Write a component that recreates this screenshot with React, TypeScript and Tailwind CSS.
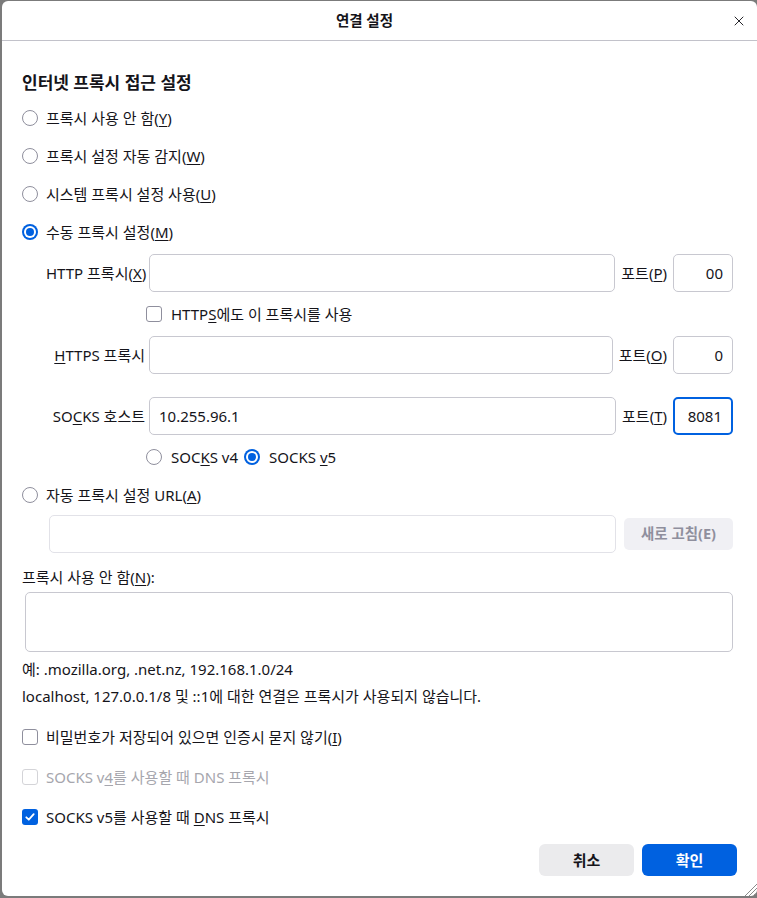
import React from "react";
import { X } from "lucide-react";

const font = "font-['Noto_Sans','Noto_Sans_CJK_KR',sans-serif]";

const Radio = ({ checked }: { checked?: boolean }) =>
  checked ? (
    <span className="w-4 h-4 rounded-full bg-[#0061e0] flex items-center justify-center shrink-0">
      <span className="w-[12px] h-[12px] rounded-full bg-white flex items-center justify-center">
        <span className="w-[8px] h-[8px] rounded-full bg-[#0061e0]" />
      </span>
    </span>
  ) : (
    <span className="w-4 h-4 rounded-full border border-[#8f8f9d] bg-white shrink-0" />
  );

const Checkbox = ({ checked, disabled }: { checked?: boolean; disabled?: boolean }) =>
  checked ? (
    <span className="w-4 h-4 rounded-[3px] bg-[#0061e0] flex items-center justify-center shrink-0">
      <svg width="12" height="12" viewBox="0 0 12 12" fill="none">
        <path d="M2.3 6.3 L4.8 8.7 L9.7 3.2" stroke="white" strokeWidth="1.8" strokeLinecap="round" strokeLinejoin="round" />
      </svg>
    </span>
  ) : (
    <span
      className={
        "w-4 h-4 rounded-[3px] border bg-white shrink-0 " +
        (disabled ? "border-[#d4d4d8]" : "border-[#8f8f9d]")
      }
    />
  );

const Field = ({ value, right, focused, className = "" }: { value?: string; right?: boolean; focused?: boolean; className?: string }) => (
  <div
    className={
      "h-[38px] rounded-[5px] bg-white flex items-center px-[9px] text-[15px] " +
      (focused ? "border-2 border-[#0061e0] px-[8px] " : "border border-[#c8c8d0] ") +
      (right ? "justify-end " : "") +
      className
    }
  >
    {value}
  </div>
);

const ProxyRow = ({
  label,
  port,
  portLabel,
  host,
  focused,
}: {
  label: React.ReactNode;
  port: string;
  portLabel: React.ReactNode;
  host?: string;
  focused?: boolean;
}) => (
  <div className="flex items-center h-[38px] pl-[24px]">
    <div className="w-[99px] text-right shrink-0 whitespace-nowrap">{label}</div>
    <Field value={host} className="flex-1 ml-[4px]" />
    <div className="mx-[6px] whitespace-nowrap">{portLabel}</div>
    <Field value={port} right focused={focused} className="w-[60px] shrink-0" />
  </div>
);

export default function App() {
  return (
    <div className={"w-[757px] h-[898px] bg-[#7b7b7b] pt-[1px] pl-[2px] " + font}>
      <div className="relative w-[755px] h-[895px] bg-white rounded-[6px] text-[#15141a] text-[15px] flex flex-col overflow-hidden">
        {/* title bar */}
        <div className="h-[40px] border-b border-[#c2c2ca] flex items-center justify-center relative shrink-0 pr-[30px]">
          <span className="font-bold text-[14.5px]">연결 설정</span>
          <X className="absolute right-[10px] top-[12px] w-[16px] h-[16px]" strokeWidth={1.4} />
        </div>

        <div className="pl-[20px] pr-[24px] flex flex-col">
          <div className="h-[24px] mt-[30px] flex items-center font-bold text-[17px]">인터넷 프록시 접근 설정</div>

          <div className="mt-[4px]">
            <label className="h-[38px] flex items-center gap-[8px]">
              <Radio />
              <span>
                프록시 사용 안 함(<u className="underline-offset-2">Y</u>)
              </span>
            </label>
            <label className="h-[38px] flex items-center gap-[8px]">
              <Radio />
              <span>
                프록시 설정 자동 감지(<u className="underline-offset-2">W</u>)
              </span>
            </label>
            <label className="h-[38px] flex items-center gap-[8px]">
              <Radio />
              <span>
                시스템 프록시 설정 사용(<u className="underline-offset-2">U</u>)
              </span>
            </label>
            <label className="h-[38px] flex items-center gap-[8px]">
              <Radio checked />
              <span>
                수동 프록시 설정(<u className="underline-offset-2">M</u>)
              </span>
            </label>
          </div>

          <div className="mt-[3px]">
            <ProxyRow
              label={
                <>
                  HTTP 프록시(<u className="underline-offset-2">X</u>)
                </>
              }
              portLabel={
                <>
                  포트(<u className="underline-offset-2">P</u>)
                </>
              }
              port="00"
            />
            <label className="h-[44px] flex items-center gap-[9px] pl-[124px]">
              <Checkbox />
              <span>
                HTTP<u className="underline-offset-2">S</u>에도 이 프록시를 사용
              </span>
            </label>
            <ProxyRow
              label={
                <>
                  <u className="underline-offset-2">H</u>TTPS 프록시
                </>
              }
              portLabel={
                <>
                  포트(<u className="underline-offset-2">O</u>)
                </>
              }
              port="0"
            />
            <div className="h-[23px]" />
            <ProxyRow
              label={
                <>
                  SO<u className="underline-offset-2">C</u>KS 호스트
                </>
              }
              portLabel={
                <>
                  포트(<u className="underline-offset-2">T</u>)
                </>
              }
              host="10.255.96.1"
              port="8081"
              focused
            />
            <div className="h-[44px] flex items-center pl-[124px]">
              <label className="flex items-center gap-[9px]">
                <Radio />
                <span>
                  SOC<u className="underline-offset-2">K</u>S v4
                </span>
              </label>
              <label className="flex items-center gap-[9px] ml-[6px]">
                <Radio checked />
                <span>
                  SOCKS <u className="underline-offset-2">v</u>5
                </span>
              </label>
            </div>
          </div>

          <label className="h-[32px] flex items-center gap-[8px]">
            <Radio />
            <span>
              자동 프록시 설정 URL(<u className="underline-offset-2">A</u>)
            </span>
          </label>
          <div className="mt-[4px] h-[38px] flex items-center pl-[27px]">
            <div className="flex-1 h-[38px] rounded-[5px] border border-[#e2e2e8] bg-white" />
            <button className="ml-[8px] w-[109px] h-[32px] rounded-[5px] bg-[#f0f0f4] text-[#8f8f9d] font-bold text-[14.5px]">
              새로 고침(E)
            </button>
          </div>

          <div className="mt-[12px] h-[24px] flex items-center">
            <span>
              프록시 사용 안 함(<u className="underline-offset-2">N</u>):
            </span>
          </div>
          <div className="mt-[3px] ml-[3px] h-[60px] rounded-[5px] border border-[#c8c8d0]" />

          <div className="mt-[4px] h-[27px] flex items-center">예: .mozilla.org, .net.nz, 192.168.1.0/24</div>
          <div className="h-[27px] flex items-center">
            localhost, 127.0.0.1/8 및 ::1에 대한 연결은 프록시가 사용되지 않습니다.
          </div>

          <div className="mt-[7px]">
            <label className="h-[40px] flex items-center gap-[8px]">
              <Checkbox />
              <span>
                비밀번호가 저장되어 있으면 인증시 묻지 않기(<u className="underline-offset-2">I</u>)
              </span>
            </label>
            <label className="h-[40px] flex items-center gap-[8px] text-[#a6a6ad]">
              <Checkbox disabled />
              <span>
                SOCKS v<u className="underline-offset-2">4</u>를 사용할 때 DNS 프록시
              </span>
            </label>
            <label className="h-[40px] flex items-center gap-[8px]">
              <Checkbox checked />
              <span>
                SOCKS v5를 사용할 때 <u className="underline-offset-2">D</u>NS 프록시
              </span>
            </label>
          </div>

          <div className="mt-[7px] flex justify-end gap-[8px]">
            <button className="w-[95px] h-[32px] rounded-[6px] bg-[#ebebed] font-bold text-[15px]">취소</button>
            <button className="w-[95px] h-[32px] rounded-[6px] bg-[#0061e0] text-white font-bold text-[15px] -mr-[4px]">
              확인
            </button>
          </div>
        </div>

        {/* resize grip */}
        <svg className="absolute right-0 bottom-0" width="13" height="13" viewBox="0 0 13 13">
          <path d="M13 1 L1 13 M13 5 L5 13 M13 9 L9 13" stroke="#8a8a8a" strokeWidth="1" />
        </svg>
      </div>
    </div>
  );
}
